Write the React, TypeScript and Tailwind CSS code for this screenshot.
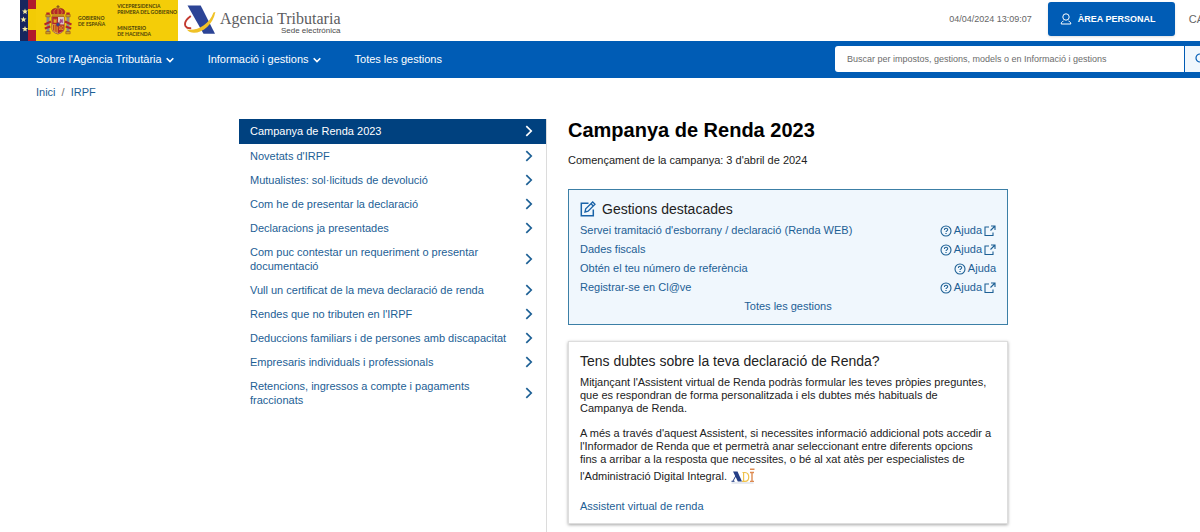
import React from 'react';

const sections = [
  "Novetats d'IRPF",
  'Mutualistes: sol·licituds de devolució',
  'Com he de presentar la declaració',
  'Declaracions ja presentades',
  'Com puc contestar un requeriment o presentar documentació',
  'Vull un certificat de la meva declaració de renda',
  "Rendes que no tributen en l'IRPF",
  'Deduccions familiars i de persones amb discapacitat',
  'Empresaris individuals i professionals',
  'Retencions, ingressos a compte i pagaments fraccionats',
];

const tasks = [
  { label: "Servei tramitació d'esborrany / declaració (Renda WEB)", external: true },
  { label: 'Dades fiscals', external: true },
  { label: 'Obtén el teu número de referència', external: false },
  { label: 'Registrar-se en Cl@ve', external: true },
];

function ChevronRight() {
  return (
    <svg className="h-3 w-2 shrink-0" viewBox="0 0 8 12" fill="none" stroke="currentColor" strokeWidth="1.7" aria-hidden="true">
      <path d="M1.3 1.2 6.2 6 1.3 10.8" />
    </svg>
  );
}

function ChevronDown() {
  return (
    <svg className="mt-0.5 h-2 w-2" viewBox="0 0 8 8" fill="none" stroke="currentColor" strokeWidth="1.6" aria-hidden="true">
      <path d="M.7 2.3 4 5.6l3.3-3.3" />
    </svg>
  );
}

function HelpIcon() {
  return (
    <svg className="h-3 w-3" viewBox="0 0 12 12" fill="none" stroke="currentColor" aria-hidden="true">
      <circle cx="6" cy="6" r="5" strokeWidth="1.1" />
      <path d="M4.4 4.9c0-2.3 3.3-2.2 3.3-.2C7.7 5.9 6 5.8 6 7.1" strokeWidth="1.1" />
      <path d="M6 8v1.1" strokeWidth="1.2" />
    </svg>
  );
}

function ExternalIcon() {
  return (
    <svg className="h-3 w-3" viewBox="0 0 12 12" fill="none" stroke="currentColor" strokeWidth="1.1" aria-hidden="true">
      <path d="M5 2H1v8.500h8V7.500M7 1h4v4M11 1 6.500 5.500" />
    </svg>
  );
}

function EditIcon() {
  return (
    <svg className="h-4 w-4" viewBox="0 0 16 16" fill="none" stroke="#1a63a8" strokeWidth="1.5" aria-hidden="true">
      <path d="M8.500 2.300H1.300v12.400h12V8.500" />
      <path d="m5 11 .7-3.200 7-6.800 2.300 2.300-6.900 6.900zM11 2.700l2.300 2.300" strokeWidth="1.3" />
    </svg>
  );
}

function EuropeFlag() {
  return (
    <svg className="h-[41px] w-4 shrink-0" viewBox="0 0 16 41" aria-hidden="true">
      <path fill="#b01a2c" d="M8 0h8v9H8zM8 30h8v11H8z" />
      <path fill="#f2cb05" d="M8 9h8v21H8z" />
      <path fill="#17265e" d="M0 0h8v41H0z" />
      <g fill="#f4e9a0">
        <path d="m5 8.500.8 2 2.200.1-1.700 1.400.6 2.100L5 12.900l-1.900 1.200.6-2.100L2 10.600l2.200-.1z" />
        <path d="m3.500 16.500.8 2 2.200.1-1.700 1.400.6 2.100-1.900-1.200-1.900 1.200.6-2.100L.5 18.600l2.200-.1z" />
        <path d="m5 26 .8 2 2.200.1-1.700 1.400.6 2.100L5 30.400l-1.900 1.200.6-2.100L2 28.100l2.200-.1z" />
      </g>
    </svg>
  );
}

function CoatOfArms() {
  return (
    <svg className="h-[31px] w-7 shrink-0" viewBox="0 0 28 31" aria-hidden="true">
      <path fill="#8d8a86" d="M2.500 12h3v15h-3zM22.500 12h3v15h-3z" />
      <path fill="#c9a227" stroke="#8a3a1c" strokeWidth=".5" d="M1.800 9.500h4.400v2.300H1.800zM21.800 9.500h4.400v2.300h-4.400zM1.800 26.500h4.400v2.300H1.800zM21.800 26.500h4.400v2.300h-4.400z" />
      <path fill="#b3262a" d="M2.300 7.500h3.400v2H2.300zM22.300 7.500h3.400v2h-3.400z" />
      <path fill="none" stroke="#b3262a" strokeWidth="2" d="M.5 19.500 7 16.500M.8 23.500l5.500-2M27.500 19.500 21 16.500M27.200 23.500l-5.500-2" />
      <path fill="#b3262a" stroke="#7c2a1a" strokeWidth=".5" d="M8 9.500C5.500 5.500 9 3 14 3s8.500 2.500 6 6.500z" />
      <path fill="none" stroke="#dba52a" strokeWidth=".7" d="M10.500 9c-1.500-2.500 0-5 3.500-6 3.500 1 5 3.500 3.500 6M14 3v6" />
      <path fill="#8a5a1c" d="M13.300.3h1.400v3h-1.400zM12.500 1h3v1h-3z" />
      <path fill="#c98a20" d="M7.800 9h12.400v2.200H7.800z" />
      <path fill="#d9b0a0" stroke="#7c2a1a" strokeWidth=".6" d="M7.800 11.700h12.400v11c0 4-2.700 5.300-6.200 6.300-3.500-1-6.200-2.300-6.200-6.300z" />
      <path fill="#b3262a" d="M8.200 12H14v7.500H8.200z" />
      <path fill="#dcc6c6" d="M14 12h5.900v7.500H14z" />
      <path fill="#a3478b" d="m15.300 17.800 1-4 1.700 1 .8-1.200v4.600l-1.500-.9-.7 1.100z" />
      <path fill="#e2a820" d="M9.600 17.800v-4h1v1h1v-1h1v4z" />
      <path fill="#e2a820" d="M8.200 19.500H14v8.700c-4-1.200-5.800-2.500-5.800-5.500z" />
      <path stroke="#b3262a" strokeWidth=".8" d="M9.500 20v5.500M11.200 20v6.800M12.900 20v7.500" />
      <path fill="#b3262a" d="M14 19.500h5.900v3.200c0 3-1.900 4.300-5.900 5.500z" />
      <path fill="none" stroke="#e2a820" strokeWidth=".6" d="M15 21h4v3.500h-3.500zM15 21l4 4M19 21l-4 4" />
      <circle cx="14" cy="19.500" r="1.900" fill="#294a8e" stroke="#b3262a" strokeWidth=".6" />
    </svg>
  );
}

function AgencyMark() {
  return (
    <svg className="mb-0.5 h-[30px] w-8 shrink-0" viewBox="0 0 32 30" aria-hidden="true">
      <path fill="#2c4496" d="M3.500.5h13.200L31 28.800H19.500z" />
      <path fill="none" stroke="#c3392f" strokeWidth="1.9" d="M6.800 11C1.500 15 .4 19 1.600 21.200c1 1.700 3 2.200 5.600 2" />
      <path fill="#f0c228" d="M2.800 24.500C13 26.200 25 20 29.500 7.500l1.900-.6C29 19.500 19 27.500 10 27.800c-3 0-5.500-1-7.200-3.300z" />
    </svg>
  );
}

function AdiMark() {
  return (
    <svg className="mt-0.5 ml-1 inline-block h-4 w-6 align-[-4px]" viewBox="0 0 24 16" role="img" aria-label="ADI">
      <path fill="#253f86" d="M2 3.500h4.500l4.500 10H6.800z" />
      <path fill="none" stroke="#253f86" d="M5 7.500 2 13M.5 13.300h3" />
      <path fill="none" stroke="#efc24a" strokeWidth="1.200" d="M11 13.300h3c5 0 5-8.800 0-8.800h-2.500M12.600 4.500v8.800" />
      <path fill="none" stroke="#dd8b52" strokeWidth="1.400" d="M21 4.500v8.800M19 4.500h4M19 13.400h4M19 1.300h4.500" />
      <path stroke="#bcc4d6" strokeWidth=".7" d="M.5 15h22" />
    </svg>
  );
}

export default function App() {
  return (
    <div className="min-h-screen overflow-hidden bg-white font-['Liberation_Sans',Arial,sans-serif] text-[11px] leading-[14px] text-[#222]">
      <div className="flex min-h-screen w-[104%] flex-col">
        <header>
          <div className="flex h-[41px] items-center justify-between pr-11 pl-5">
            <div className="flex items-center">
              <div className="flex h-[41px] items-center bg-[#f4cd08] font-['Lato',sans-serif] text-[5px] leading-[6px] font-bold text-[#4b3d08]">
                <EuropeFlag />
                <div className="flex items-center gap-1.5 pl-2">
                  <CoatOfArms />
                  <p>
                    GOBIERNO
                    <br />
                    DE ESPAÑA
                  </p>
                </div>
                <div className="flex flex-col gap-2.5 pr-px pb-0.5 pl-3">
                  <p>
                    VICEPRESIDENCIA
                    <br />
                    PRIMERA DEL GOBIERNO
                  </p>
                  <p>
                    MINISTERIO
                    <br />
                    DE HACIENDA
                  </p>
                </div>
              </div>
              <a href="#inici" className="flex items-center gap-1 pl-1.5">
                <AgencyMark />
                <span className="flex flex-col items-end pt-1">
                  <span className="font-['Liberation_Serif',serif] text-[16px] leading-[16px] text-[#5c5c60]">Agencia Tributaria</span>
                  <span className="text-[8px] leading-[8px] text-[#4c4c4c]">Sede electrónica</span>
                </span>
              </a>
            </div>
            <div className="flex items-center pb-[3px]">
              <time className="text-[9px] text-[#666]">04/04/2024 13:09:07</time>
              <button type="button" className="ml-4 flex h-[34px] w-[127px] items-center gap-1.5 rounded-[3px] bg-[#005cb5] pl-3 text-[9px] font-bold text-white shadow-sm">
                <svg className="h-3 w-3" viewBox="0 0 12 12" fill="none" stroke="currentColor" aria-hidden="true">
                  <circle cx="6" cy="4" r="3.2" />
                  <path d="M3.500 8C2 8.600 1.200 9.500 1.200 11h9.600c0-1.500-.8-2.400-2.300-3" />
                </svg>
                ÀREA PERSONAL
              </button>
              <button type="button" className="ml-3.5 text-[#666]">CA</button>
            </div>
          </div>
          <div className="flex h-[37px] items-center justify-between bg-[#005cb5] px-9 text-white">
            <nav className="flex gap-[34px] pb-px">
              <button type="button" className="flex items-center gap-1">
                Sobre l'Agència Tributària <ChevronDown />
              </button>
              <button type="button" className="flex items-center gap-1">
                Informació i gestions <ChevronDown />
              </button>
              <a href="#gestions">Totes les gestions</a>
            </nav>
            <form className="mb-px flex h-[26px] w-[377px] overflow-hidden rounded-[3px] bg-white" onSubmit={(e) => e.preventDefault()}>
              <input
                type="search"
                aria-label="Buscar"
                placeholder="Buscar per impostos, gestions, models o en Informació i gestions"
                className="min-w-0 flex-1 px-3 text-[9px] text-[#333] placeholder:text-[#6c6c6c]"
              />
              <button type="submit" aria-label="Cercar" className="flex w-7 items-center border-l border-[#005cb5] bg-[#f0f7fd] pl-2.5 text-[#005cb5]">
                <svg className="h-3 w-3" viewBox="0 0 12 12" fill="none" stroke="currentColor" strokeWidth="1.2" aria-hidden="true">
                  <circle cx="5" cy="5" r="4" />
                  <path d="m8 8 3.500 3.500" />
                </svg>
              </button>
            </form>
          </div>
        </header>

        <nav aria-label="Ruta" className="flex gap-1.5 px-9 pt-[7px] text-[#1d6095]">
          <a href="#inici">Inici</a>
          <span className="text-[#777]">/</span>
          <a href="#irpf">IRPF</a>
        </nav>

        <div className="mx-auto mt-5 flex w-full max-w-[770px] flex-1 gap-[21px]">
          <aside className="w-[308px] shrink-0 border-r border-[#dcdcdc]">
            <ul className="text-[#1d6095]">
              <li>
                <a href="#campanya" aria-current="page" className="flex h-[25px] items-center justify-between bg-[#00417f] pr-[13px] pb-px pl-[11px] text-white">
                  Campanya de Renda 2023 <ChevronRight />
                </a>
              </li>
              {sections.map((label) => (
                <li key={label}>
                  <a href="#seccio" className="flex items-center justify-between gap-2 py-[5px] pr-[13px] pl-[11px]">
                    <span>{label}</span>
                    <ChevronRight />
                  </a>
                </li>
              ))}
            </ul>
          </aside>

          <main className="min-w-0 flex-1 pr-px pb-[7px]">
            <h1 className="text-[20px] leading-[22px] font-bold text-black">Campanya de Renda 2023</h1>
            <p className="mt-3">Començament de la campanya: 3 d'abril de 2024</p>

            <section className="mt-[22px] border border-[#3c7fa6] bg-[#f0f7fd] px-[11px] pt-2.5 pb-2">
              <h2 className="flex items-center gap-1.5 text-[14px] leading-[18px]">
                <EditIcon /> Gestions destacades
              </h2>
              <ul className="pt-[3px] leading-[19px] text-[#1d6095]">
                {tasks.map((task) => (
                  <li key={task.label} className="flex justify-between">
                    <a href="#tramit">{task.label}</a>
                    <a href="#ajuda" className="flex items-center gap-0.5">
                      <HelpIcon /> Ajuda {task.external && <ExternalIcon />}
                    </a>
                  </li>
                ))}
                <li className="text-center">
                  <a href="#gestions">Totes les gestions</a>
                </li>
              </ul>
            </section>

            <section className="mt-4 border border-[#ddd] px-[11px] pt-2.5 pb-2.5 leading-[13px] shadow-[0_1px_3px_rgba(0,0,0,0.35)]">
              <h2 className="text-[14px] leading-[18px]">Tens dubtes sobre la teva declaració de Renda?</h2>
              <p className="mt-1.5 pr-1">
                Mitjançant l'Assistent virtual de Renda podràs formular les teves pròpies preguntes, que es respondran de forma personalitzada i els dubtes més habituals de Campanya de Renda.
              </p>
              <p className="mt-3 pr-1">
                A més a través d'aquest Assistent, si necessites informació addicional pots accedir a l'Informador de Renda que et permetrà anar seleccionant entre diferents opcions fins a arribar a la resposta que necessites, o bé al xat atès per especialistes de l'Administració Digital Integral.
                <AdiMark />
              </p>
              <p className="mt-4">
                <a href="#assistent" className="text-[#1d6095]">Assistent virtual de renda</a>
              </p>
            </section>
          </main>
        </div>
      </div>
    </div>
  );
}
